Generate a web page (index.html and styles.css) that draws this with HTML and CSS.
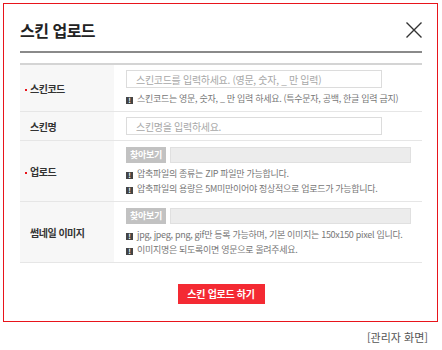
FILE: index.html
```html
<!DOCTYPE html>
<html lang="ko">
  <head>
    <meta charset="UTF-8" />
    <meta name="viewport" content="width=device-width, initial-scale=1.0" />
    <title>스킨 업로드</title>
    <link rel="stylesheet" href="styles.css">
  </head>
  <body>
    <div class="wrap">
      <div class="modal">
        <div class="modal-head">
          <h2 class="modal-title">스킨 업로드</h2>
          <button class="close" type="button">
            <svg width="16" height="16" viewBox="0 0 16 16">
              <path d="M0.5 0.5 L15.5 15.5 M15.5 0.5 L0.5 15.5" stroke="#333" stroke-width="1.4" fill="none" />
            </svg>
          </button>
        </div>

        <table class="form-table">
          <tr class="row-code">
            <th><span class="req"></span>스킨코드</th>
            <td>
              <input class="text-input" type="text" placeholder="스킨코드를 입력하세요. (영문, 숫자, _ 만 입력)" />
              <p class="help"><i class="ico">!</i>스킨코드는 영문, 숫자, _ 만 입력 하세요. (특수문자, 공백, 한글 입력 금지)</p>
            </td>
          </tr>
          <tr class="row-name">
            <th>스킨명</th>
            <td>
              <input class="text-input" type="text" placeholder="스킨명을 입력하세요." />
            </td>
          </tr>
          <tr>
            <th><span class="req"></span>업로드</th>
            <td>
              <div class="file">
                <button class="file-btn" type="button">찾아보기</button>
                <span class="file-name"></span>
              </div>
              <p class="help"><i class="ico">!</i>압축파일의 종류는 ZIP 파일만 가능합니다.</p>
              <p class="help"><i class="ico">!</i>압축파일의 용량은 5M미만이어야 정상적으로 업로드가 가능합니다.</p>
            </td>
          </tr>
          <tr>
            <th>썸네일 이미지</th>
            <td>
              <div class="file">
                <button class="file-btn" type="button">찾아보기</button>
                <span class="file-name"></span>
              </div>
              <p class="help"><i class="ico">!</i>jpg, jpeg, png, gif만 등록 가능하며, 기본 이미지는 150x150 pixel 입니다.</p>
              <p class="help"><i class="ico">!</i>이미지명은 되도록이면 영문으로 올려주세요.</p>
            </td>
          </tr>
        </table>

        <div class="actions">
          <button class="submit" type="button">스킨 업로드 하기</button>
        </div>
      </div>
      <p class="caption">[관리자 화면]</p>
    </div>
  </body>
</html>
```

FILE: styles.css
```css
body {
  margin: 0;
  padding: 0;
  background: #fff;
  font-family: "Noto Sans CJK KR", "Noto Sans", sans-serif;
  color: #333;
}
.wrap {
  width: 435px;
  padding: 3px 4px 0 3px;
}
.modal {
  width: 435px;
  box-sizing: border-box;
  border: 1px solid #e8141b;
  padding: 0 15px 17px 16px;
}
.modal-head {
  display: flex;
  align-items: center;
  justify-content: space-between;
  padding: 16px 0 11px;
  border-bottom: 2px solid #8a8a8a;
}
.modal-title {
  margin: 0;
  font-size: 16px;
  line-height: 20px;
  font-weight: 700;
  letter-spacing: -0.5px;
  color: #222;
}
.close {
  width: 16px;
  height: 16px;
  padding: 0;
  border: none;
  background: none;
  display: flex;
}

.form-table {
  width: 100%;
  margin-top: 10px;
  border-collapse: collapse;
  border-top: 2px solid #d4d4d4;
}
.form-table tr {
  border-bottom: 1px solid #e6e6e6;
}
.form-table th {
  width: 85px;
  padding: 0 0 0 10px;
  background: #f7f7f7;
  text-align: left;
  font-size: 10px;
  font-weight: 700;
  letter-spacing: -0.5px;
  color: #333;
  vertical-align: middle;
}
.req {
  display: inline-block;
  width: 2px;
  height: 2px;
  background: #e8141b;
  margin-left: -5px;
  margin-right: 3px;
  vertical-align: middle;
}
.form-table td {
  padding: 5px 11px 5px 12px;
  line-height: 15px;
}
.text-input {
  display: block;
  width: 256px;
  height: 18px;
  box-sizing: border-box;
  margin: 0;
  padding: 0 9px;
  border: 1px solid #dcdcdc;
  font-family: inherit;
  font-size: 10px;
  letter-spacing: -0.3px;
  outline: none;
}
.text-input::placeholder {
  color: #a8a8a8;
}
.help {
  margin: 0;
  font-size: 9px;
  line-height: 15px;
  letter-spacing: -0.3px;
  color: #777;
  white-space: nowrap;
}
.file + .help,
.text-input + .help {
  margin-top: 3px;
}
.ico {
  display: inline-block;
  width: 7px;
  height: 7px;
  margin-right: 4px;
  background: #444;
  color: #fff;
  font-size: 7px;
  line-height: 7px;
  font-style: normal;
  font-weight: 700;
  text-align: center;
  vertical-align: -1px;
  letter-spacing: 0;
}
.file {
  display: flex;
  gap: 4px;
  padding-top: 1px;
}
.file-btn {
  width: 40px;
  height: 16px;
  padding: 0;
  border: none;
  background: #c2c2c2;
  color: #fff;
  font-family: inherit;
  font-size: 9px;
  line-height: 16px;
  font-weight: 700;
  letter-spacing: -0.3px;
}
.file-name {
  width: 241px;
  height: 16px;
  box-sizing: border-box;
  background: #ececec;
  border: 1px solid #e0e0e0;
}

.actions {
  display: flex;
  justify-content: center;
  padding-top: 21px;
}
.submit {
  width: 87px;
  height: 20px;
  padding: 0;
  border: none;
  background: #f42a33;
  color: #fff;
  font-family: inherit;
  font-size: 10px;
  line-height: 20px;
  font-weight: 700;
  letter-spacing: -0.3px;
}
.caption {
  margin: 8px 10px 0 0;
  text-align: right;
  font-size: 11px;
  line-height: 14px;
  color: #555;
}
```
